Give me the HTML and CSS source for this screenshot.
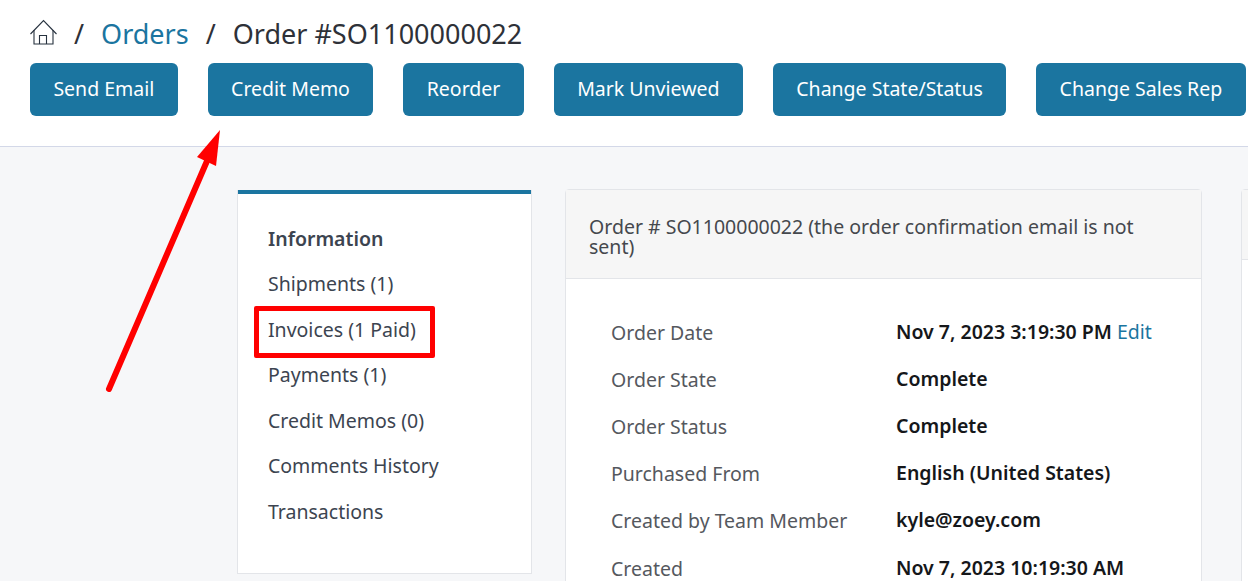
FILE: index.html
```html
<!DOCTYPE html>
<html lang="en">
<head>
<meta charset="utf-8">
<title>Order #SO1100000022</title>
<link rel="stylesheet" href="styles.css">
</head>
<body>
<header class="top">
  <nav class="crumbs">
    <svg class="home" width="28" height="26" viewBox="0 0 28 26" fill="none" stroke="#27323f" stroke-width="1.1">
      <path d="M0.5 15 13.5 1.5 26.5 15"/>
      <path d="M4 11V25H23V11"/>
      <path d="M9.5 25V16.5H16.5V25"/>
    </svg>
    <span class="sep">/</span>
    <a class="crumb-link">Orders</a>
    <span class="sep">/</span>
    <span class="crumb-current">Order #SO1100000022</span>
  </nav>
  <div class="actions">
    <button class="btn">Send Email</button>
    <button class="btn">Credit Memo</button>
    <button class="btn">Reorder</button>
    <button class="btn">Mark Unviewed</button>
    <button class="btn">Change State/Status</button>
    <button class="btn">Change Sales Rep</button>
  </div>
</header>
<main class="content">
  <aside class="side">
    <ul class="side-list">
      <li class="side-item active">Information</li>
      <li class="side-item">Shipments (1)</li>
      <li class="side-item">Invoices (1 Paid)</li>
      <li class="side-item">Payments (1)</li>
      <li class="side-item">Credit Memos (0)</li>
      <li class="side-item">Comments History</li>
      <li class="side-item">Transactions</li>
    </ul>
  </aside>
  <section class="card">
    <div class="card-head">Order # SO1100000022 (the order confirmation email is not sent)</div>
    <div class="card-body">
      <div class="row"><span class="label">Order Date</span><span class="value">Nov 7, 2023 3:19:30 PM <a class="edit">Edit</a></span></div>
      <div class="row"><span class="label">Order State</span><span class="value">Complete</span></div>
      <div class="row"><span class="label">Order Status</span><span class="value">Complete</span></div>
      <div class="row"><span class="label">Purchased From</span><span class="value">English (United States)</span></div>
      <div class="row"><span class="label">Created by Team Member</span><span class="value">kyle@zoey.com</span></div>
      <div class="row"><span class="label">Created</span><span class="value">Nov 7, 2023 10:19:30 AM</span></div>
    </div>
  </section>
  <section class="card-next"><div class="card-next-head"></div></section>
</main>
<div class="mark-box"></div>
<svg class="arrow" width="130" height="270" viewBox="0 0 130 270" fill="none">
  <path d="M9 264 107 36" stroke="#ff0000" stroke-width="6" stroke-linecap="round"/>
  <path d="M120 5 116 41 97 32Z" fill="#ff0000"/>
</svg>
</body>
</html>
```
FILE: styles.css
```css
* { box-sizing: border-box; }
html, body { margin: 0; height: 581px; overflow: hidden; }
body {
  position: relative;
  font-family: "Noto Sans", "Liberation Sans", sans-serif;
  background: #f6f7f9;
  color: #3d4148;
}
.top {
  height: 147px;
  background: #fff;
  border-bottom: 1px solid #d3d8e8;
  padding: 14px 0 0 30px;
  overflow: hidden;
}
.crumbs {
  display: flex;
  align-items: center;
  height: 38px;
  font-size: 27px;
  color: #2e3138;
}
.home { margin-right: 16px; margin-top: -2px; flex: none; }
.sep { margin-right: 17px; }
.crumb-link { color: #1b75a0; margin-right: 17px; }
.actions {
  display: flex;
  gap: 30px;
  margin-top: 11px;
}
.btn {
  flex: none;
  height: 53px;
  padding: 0 23.4px 2px;
  border: 0;
  border-radius: 6px;
  background: #1b75a0;
  color: #fff;
  font: 400 19.5px "Noto Sans", sans-serif;
  white-space: nowrap;
}
.content {
  display: flex;
  align-items: flex-start;
  padding: 42px 0 0 237px;
  overflow: hidden;
  height: 434px;
}
.side {
  flex: none;
  width: 295px;
  height: 384px;
  background: #fff;
  border: 1px solid #e3e5e9;
  border-top: 0;
  box-shadow: inset 0 4px 0 #1b75a0;
  margin-top: 1px;
  padding: 25.7px 0 0 30px;
}
.side-list { list-style: none; margin: 0; padding: 0; }
.side-item { height: 45.5px; line-height: 45.5px; font-size: 19.5px; color: #3c4450; }
.active { font-weight: 600; }
.card {
  flex: none;
  width: 637px;
  margin-left: 33px;
  background: #fff;
  border: 1px solid #e3e5e9;
  border-radius: 4px 4px 0 0;
  height: 420px;
}
.card-head {
  height: 89px;
  padding: 27px 22px 0 23px;
  background: #f6f6f6;
  border-bottom: 1px solid #e3e5e9;
  font-size: 19.5px;
  line-height: 20px;
  color: #45484d;
}
.card-body { padding: 29.6px 0 0 45px; }
.row { display: flex; height: 47.2px; font-size: 19.5px; }
.label { width: 285px; color: #55585e; line-height: 47.2px; }
.value { font-weight: 600; color: #15171a; white-space: nowrap; line-height: 46.7px; }
.edit { font-weight: 400; color: #1b75a0; }
.card-next {
  flex: none;
  width: 200px;
  height: 420px;
  margin-left: 39px;
  background: #fff;
  border: 1px solid #e3e5e9;
  border-radius: 4px 0 0 0;
}
.card-next-head { height: 70px; background: #f6f6f6; border-bottom: 1px solid #e3e5e9; }
.mark-box {
  position: absolute;
  left: 254px;
  top: 306px;
  width: 181px;
  height: 52px;
  border: 5px solid #ff0000;
  border-radius: 2px;
}
.arrow { position: absolute; left: 100px; top: 125px; }
```
